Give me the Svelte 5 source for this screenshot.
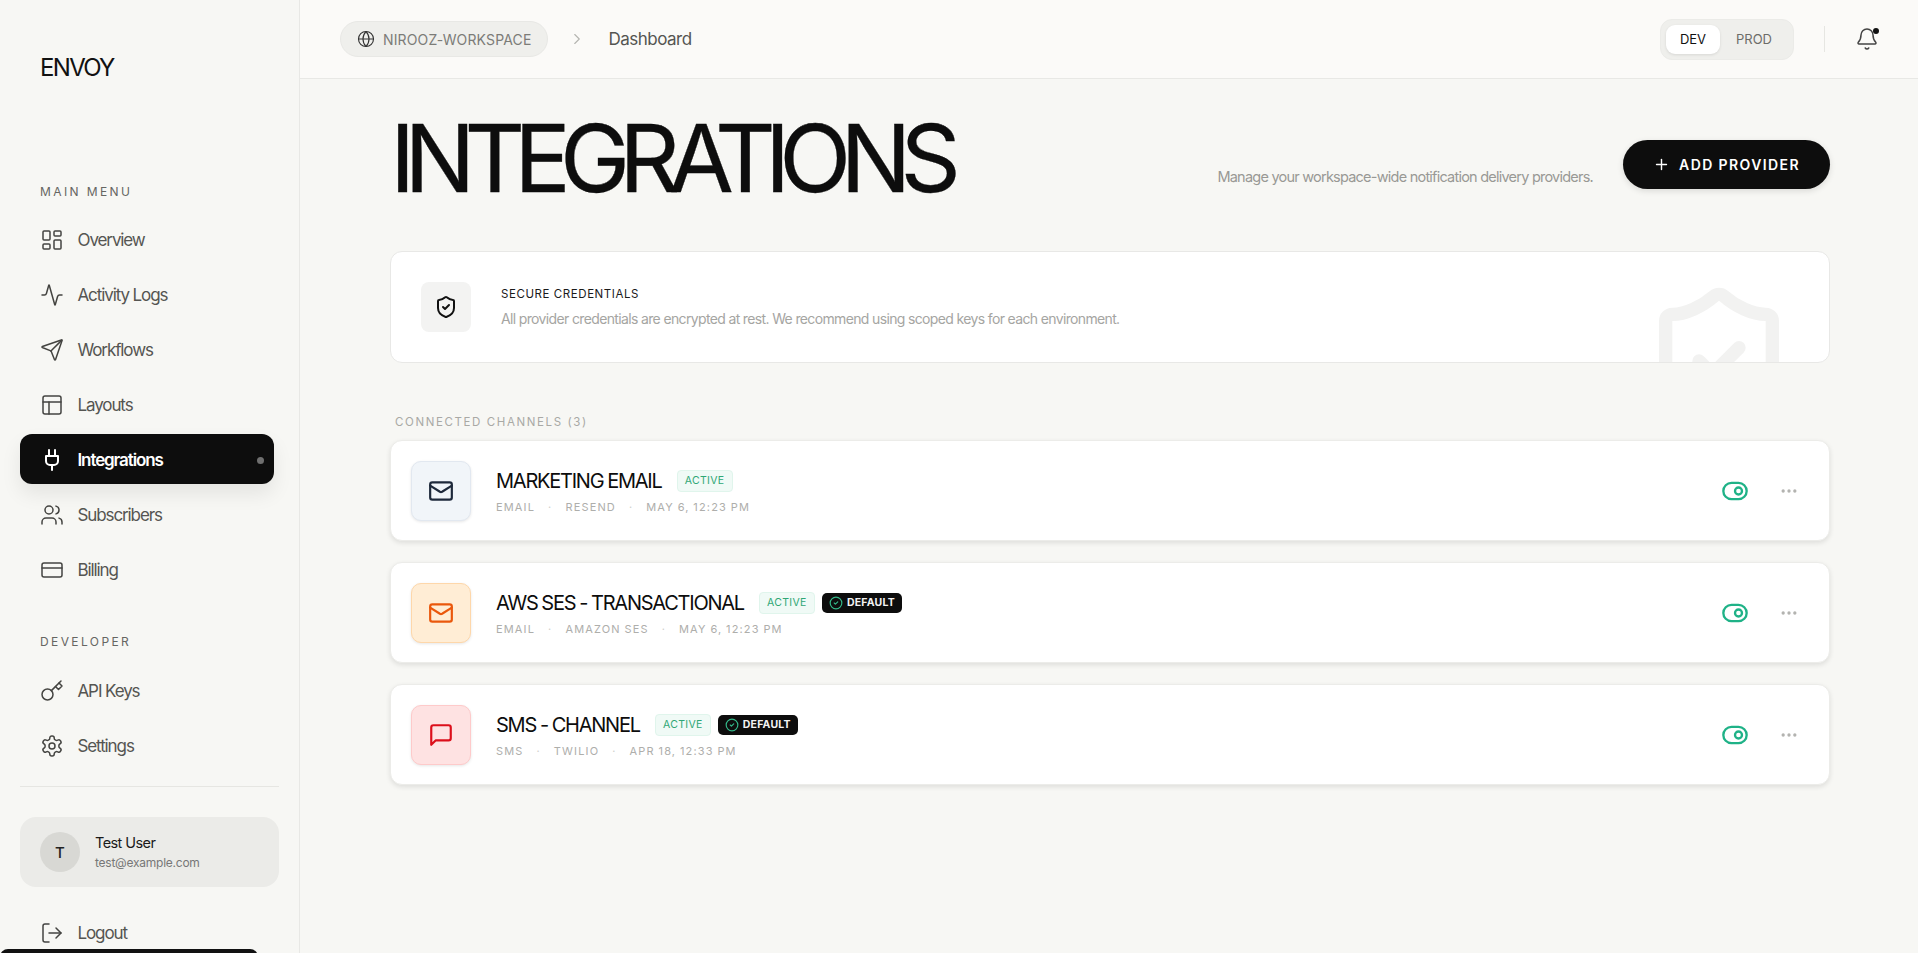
<script>
  const mainNav = [
    { label: 'Overview', icon: 'dashboard' },
    { label: 'Activity Logs', icon: 'activity' },
    { label: 'Workflows', icon: 'send' },
    { label: 'Layouts', icon: 'layout' },
    { label: 'Integrations', icon: 'plug', active: true },
    { label: 'Subscribers', icon: 'users' },
    { label: 'Billing', icon: 'card' }
  ];
  const devNav = [
    { label: 'API Keys', icon: 'key' },
    { label: 'Settings', icon: 'settings' }
  ];
  const channels = [
    { name: 'MARKETING EMAIL', kind: 'EMAIL', provider: 'RESEND', date: 'MAY 6, 12:23 PM', icon: 'mail', tone: 'slate' },
    { name: 'AWS SES - TRANSACTIONAL', kind: 'EMAIL', provider: 'AMAZON SES', date: 'MAY 6, 12:23 PM', icon: 'mail', tone: 'orange', isDefault: true },
    { name: 'SMS - CHANNEL', kind: 'SMS', provider: 'TWILIO', date: 'APR 18, 12:33 PM', icon: 'message', tone: 'red', isDefault: true }
  ];
</script>

{#snippet icon(name, size = 24, stroke = 2)}
  <svg width={size} height={size} viewBox="0 0 24 24" fill="none" stroke="currentColor" stroke-width={stroke} stroke-linecap="round" stroke-linejoin="round">
    {#if name === 'dashboard'}
      <rect x="3" y="3" width="7" height="9" rx="1" /><rect x="14" y="3" width="7" height="5" rx="1" /><rect x="14" y="12" width="7" height="9" rx="1" /><rect x="3" y="16" width="7" height="5" rx="1" />
    {:else if name === 'activity'}
      <path d="M22 12h-2.48a2 2 0 0 0-1.93 1.46l-2.35 8.36a.25.25 0 0 1-.48 0L9.24 2.18a.25.25 0 0 0-.48 0l-2.35 8.36A2 2 0 0 1 4.49 12H2" />
    {:else if name === 'send'}
      <path d="M14.536 21.686a.5.5 0 0 0 .937-.024l6.5-19a.496.496 0 0 0-.635-.635l-19 6.5a.5.5 0 0 0-.024.937l7.93 3.18a2 2 0 0 1 1.112 1.11z" /><path d="m21.854 2.147-10.94 10.939" />
    {:else if name === 'layout'}
      <rect x="3" y="3" width="18" height="18" rx="2" /><path d="M3 9h18" /><path d="M9 21V9" />
    {:else if name === 'plug'}
      <path d="M12 22v-5" /><path d="M9 8V2" /><path d="M15 8V2" /><path d="M18 8v5a4 4 0 0 1-4 4h-4a4 4 0 0 1-4-4V8Z" />
    {:else if name === 'users'}
      <path d="M16 21v-2a4 4 0 0 0-4-4H6a4 4 0 0 0-4 4v2" /><circle cx="9" cy="7" r="4" /><path d="M22 21v-2a4 4 0 0 0-3-3.87" /><path d="M16 3.13a4 4 0 0 1 0 7.75" />
    {:else if name === 'card'}
      <rect x="2" y="5" width="20" height="14" rx="2" /><path d="M2 10h20" />
    {:else if name === 'key'}
      <circle cx="7.5" cy="15.5" r="5.5" /><path d="m21 2-9.6 9.6" /><path d="m15.5 7.5 3 3L22 7l-3-3" />
    {:else if name === 'settings'}
      <path d="M12.22 2h-.44a2 2 0 0 0-2 2v.18a2 2 0 0 1-1 1.73l-.43.25a2 2 0 0 1-2 0l-.15-.08a2 2 0 0 0-2.73.73l-.22.38a2 2 0 0 0 .73 2.73l.15.1a2 2 0 0 1 1 1.72v.51a2 2 0 0 1-1 1.74l-.15.09a2 2 0 0 0-.73 2.73l.22.38a2 2 0 0 0 2.73.73l.15-.08a2 2 0 0 1 2 0l.43.25a2 2 0 0 1 1 1.73V20a2 2 0 0 0 2 2h.44a2 2 0 0 0 2-2v-.18a2 2 0 0 1 1-1.73l.43-.25a2 2 0 0 1 2 0l.15.08a2 2 0 0 0 2.73-.73l.22-.39a2 2 0 0 0-.73-2.73l-.15-.08a2 2 0 0 1-1-1.74v-.5a2 2 0 0 1 1-1.74l.15-.09a2 2 0 0 0 .73-2.73l-.22-.38a2 2 0 0 0-2.73-.73l-.15.08a2 2 0 0 1-2 0l-.43-.25a2 2 0 0 1-1-1.73V4a2 2 0 0 0-2-2z" /><circle cx="12" cy="12" r="3" />
    {:else if name === 'logout'}
      <path d="M9 21H5a2 2 0 0 1-2-2V5a2 2 0 0 1 2-2h4" /><path d="m16 17 5-5-5-5" /><path d="M21 12H9" />
    {:else if name === 'globe'}
      <circle cx="12" cy="12" r="10" /><path d="M12 2a14.5 14.5 0 0 0 0 20 14.5 14.5 0 0 0 0-20" /><path d="M2 12h20" />
    {:else if name === 'chevron'}
      <path d="m9 18 6-6-6-6" />
    {:else if name === 'bell'}
      <path d="M10.268 21a2 2 0 0 0 3.464 0" /><path d="M3.262 15.326A1 1 0 0 0 4 17h16a1 1 0 0 0 .74-1.673C19.41 13.956 18 12.499 18 8A6 6 0 0 0 6 8c0 4.499-1.411 5.956-2.738 7.326" />
    {:else if name === 'plus'}
      <path d="M5 12h14" /><path d="M12 5v14" />
    {:else if name === 'shield'}
      <path d="M20 13c0 5-3.5 7.5-7.66 8.95a1 1 0 0 1-.67-.01C7.5 20.5 4 18 4 13V6a1 1 0 0 1 1-1c2 0 4.5-1.2 6.24-2.72a1.17 1.17 0 0 1 1.52 0C14.51 3.81 17 5 19 5a1 1 0 0 1 1 1z" /><path d="m9 12 2 2 4-4" />
    {:else if name === 'mail'}
      <path d="m22 7-8.991 5.727a2 2 0 0 1-2.009 0L2 7" /><rect x="2" y="4" width="20" height="16" rx="2" />
    {:else if name === 'message'}
      <path d="M21 15a2 2 0 0 1-2 2H7l-4 4V5a2 2 0 0 1 2-2h14a2 2 0 0 1 2 2z" />
    {:else if name === 'toggle'}
      <circle cx="15" cy="12" r="3" /><rect x="2" y="5" width="20" height="14" rx="7" />
    {:else if name === 'more'}
      <circle cx="12" cy="12" r="1" /><circle cx="19" cy="12" r="1" /><circle cx="5" cy="12" r="1" />
    {:else if name === 'check'}
      <circle cx="12" cy="12" r="10" /><path d="m9 12 2 2 4-4" />
    {/if}
  </svg>
{/snippet}

{#snippet navItem(item)}
  <a class="nav-item" class:active={item.active} href="#top">
    <span class="nav-icon">{@render icon(item.icon, 24, item.active ? 2 : 1.5)}</span>
    <span>{item.label}</span>
    {#if item.active}<span class="nav-dot"></span>{/if}
  </a>
{/snippet}

<div class="shell">
  <aside class="sidebar">
    <div class="logo">ENVOY</div>

    <div class="section-label">MAIN MENU</div>
    <nav class="nav">
      {#each mainNav as item}
        {@render navItem(item)}
      {/each}
    </nav>

    <div class="section-label developer">DEVELOPER</div>
    <nav class="nav">
      {#each devNav as item}
        {@render navItem(item)}
      {/each}
    </nav>

    <div class="side-divider"></div>

    <div class="user-card">
      <div class="avatar">T</div>
      <div class="user-text">
        <div class="user-name">Test User</div>
        <div class="user-mail">test@example.com</div>
      </div>
    </div>

    <a class="nav-item logout" href="#top">
      <span class="nav-icon">{@render icon('logout', 24, 1.5)}</span>
      <span>Logout</span>
    </a>
  </aside>

  <div class="bottom-bar"></div>

  <div class="main">
    <header class="topbar">
      <div class="crumbs">
        <div class="workspace">
          {@render icon('globe', 18, 1.5)}
          <span>NIROOZ-WORKSPACE</span>
        </div>
        <span class="crumb-sep">{@render icon('chevron', 18, 1.5)}</span>
        <span class="crumb-page">Dashboard</span>
      </div>
      <div class="top-right">
        <div class="env">
          <span class="env-btn on">DEV</span>
          <span class="env-btn prod">PROD</span>
        </div>
        <div class="top-divider"></div>
        <div class="bell">
          {@render icon('bell', 24, 1.5)}
          <span class="bell-dot"></span>
        </div>
      </div>
    </header>

    <main class="content">
      <div class="page-head">
        <h1>INTEGRATIONS</h1>
        <div class="head-right">
          <p>Manage your workspace-wide notification delivery providers.</p>
          <button class="add-btn">
            {@render icon('plus', 17, 2)}
            <span>ADD PROVIDER</span>
          </button>
        </div>
      </div>

      <section class="secure">
        <div class="secure-icon">{@render icon('shield', 24, 2)}</div>
        <div class="secure-text">
          <div class="secure-title">SECURE CREDENTIALS</div>
          <div class="secure-desc">All provider credentials are encrypted at rest. We recommend using scoped keys for each environment.</div>
        </div>
        <div class="watermark">{@render icon('shield', 160, 2)}</div>
      </section>

      <div class="list-label">CONNECTED CHANNELS (3)</div>

      <div class="channels">
        {#each channels as c}
          <div class="channel">
            <div class="channel-icon {c.tone}">{@render icon(c.icon, 26, 2)}</div>
            <div class="channel-body">
              <div class="channel-top">
                <span class="channel-name">{c.name}</span>
                <span class="badge-active">ACTIVE</span>
                {#if c.isDefault}
                  <span class="badge-default">
                    {@render icon('check', 14, 2)}
                    DEFAULT
                  </span>
                {/if}
              </div>
              <div class="channel-meta">
                <span>{c.kind}</span><i>·</i><span>{c.provider}</span><i>·</i><span>{c.date}</span>
              </div>
            </div>
            <div class="channel-actions">
              <span class="toggle">{@render icon('toggle', 28, 2)}</span>
              <span class="more">{@render icon('more', 20, 2)}</span>
            </div>
          </div>
        {/each}
      </div>
    </main>
  </div>
</div>

<style>
  :global(body) {
    margin: 0;
    background: #f7f7f4;
  }

  .shell {
    display: flex;
    position: relative;
    height: 100vh;
    overflow: hidden;
    background: #f7f7f4;
    color: #0d0d0d;
    font-family: Inter, "Noto Sans", sans-serif;
  }

  svg {
    display: block;
  }

  /* sidebar */
  .sidebar {
    flex: 0 0 259px;
    box-sizing: content-box;
    border-right: 1px solid #e8e8e5;
    padding: 0 20px;
    overflow: hidden;
  }

  .logo {
    padding: 53px 0 0 20px;
    height: 30px;
    line-height: 30px;
    font-size: 24px;
    font-weight: 400;
    letter-spacing: -0.07em;
    color: #111;
    margin-bottom: 100px;
  }

  .section-label {
    padding-left: 20px;
    height: 18px;
    line-height: 18px;
    font-size: 12px;
    letter-spacing: 0.2em;
    color: #666662;
    margin-bottom: 13px;
  }

  .section-label.developer {
    margin-top: 39px;
    margin-bottom: 14px;
  }

  .nav {
    display: flex;
    flex-direction: column;
    gap: 5px;
  }

  .nav-item {
    display: flex;
    align-items: center;
    gap: 13.5px;
    height: 50px;
    padding: 2px 10px 0 20px;
    border-radius: 12px;
    font-size: 17px;
    letter-spacing: -0.065em;
    color: #555552;
    text-decoration: none;
    width: 254px;
    box-sizing: border-box;
  }

  .nav-item.active {
    background: #0d0d0d;
    color: #fff;
    font-weight: 600;
    box-shadow: 0 10px 20px rgba(0, 0, 0, 0.08);
  }

  .nav-icon {
    display: block;
    width: 24px;
    height: 24px;
    color: #444441;
  }

  .active .nav-icon {
    color: #fff;
  }

  .nav-dot {
    width: 7px;
    height: 7px;
    border-radius: 50%;
    background: #6f6f6f;
    margin-left: auto;
  }

  .side-divider {
    height: 1px;
    background: #e6e6e2;
    margin-top: 16px;
  }

  .user-card {
    display: flex;
    align-items: center;
    gap: 15px;
    height: 70px;
    margin-top: 30px;
    padding: 0 20px;
    border-radius: 16px;
    background: #ebebe8;
  }

  .avatar {
    display: flex;
    align-items: center;
    justify-content: center;
    width: 40px;
    height: 40px;
    border-radius: 50%;
    background: #d8d8d4;
    font-size: 15px;
    font-weight: 500;
    color: #222;
  }

  .user-text {
    padding-top: 2px;
  }

  .user-name {
    font-size: 14.5px;
    letter-spacing: -0.04em;
    font-weight: 400;
    color: #1a1a1a;
    line-height: 20px;
  }

  .user-mail {
    font-size: 12px;
    letter-spacing: -0.02em;
    color: #777;
    line-height: 20px;
  }

  .logout {
    margin-top: 20px;
  }

  .bottom-bar {
    position: absolute;
    left: 0;
    bottom: -20px;
    width: 258px;
    height: 24px;
    border-radius: 8px;
    background: #111;
  }

  /* top bar */
  .main {
    flex: 1;
    min-width: 0;
  }

  .topbar {
    display: flex;
    align-items: center;
    justify-content: space-between;
    height: 78px;
    padding: 0 39px 0 40px;
    background: #fbfaf8;
    border-bottom: 1px solid #e8e8e5;
  }

  .crumbs {
    display: flex;
    align-items: center;
  }

  .workspace {
    display: flex;
    align-items: center;
    gap: 8px;
    height: 36px;
    padding: 0 16px;
    border: 1px solid #e8e8e5;
    border-radius: 18px;
    background: #efefec;
    color: #333;
    box-sizing: border-box;
  }

  .workspace span {
    font-size: 14px;
    letter-spacing: 0.01em;
    color: #7c7c78;
  }

  .crumb-sep {
    margin: 0 22px 0 20px;
    color: #b4b4b0;
  }

  .crumb-page {
    font-size: 17px;
    letter-spacing: -0.03em;
    color: #555552;
  }

  .top-right {
    display: flex;
    align-items: center;
  }

  .env {
    display: flex;
    padding: 5px;
    height: 41px;
    box-sizing: border-box;
    border: 1px solid #ebebe8;
    border-radius: 12px;
    background: #efefec;
  }

  .env-btn {
    display: flex;
    align-items: center;
    justify-content: center;
    width: 54px;
    height: 29px;
    border-radius: 9px;
    font-size: 13px;
    font-weight: 400;
    color: #6c6c69;
  }

  .env-btn.prod {
    width: 68px;
  }

  .env-btn.on {
    background: #fff;
    color: #111;
    box-shadow: 0 1px 3px rgba(0, 0, 0, 0.1);
  }

  .top-divider {
    width: 1px;
    height: 26px;
    background: #e6e6e2;
    margin: 0 30px;
  }

  .bell {
    position: relative;
    color: #444;
  }

  .bell-dot {
    position: absolute;
    top: 1px;
    right: 0;
    width: 6px;
    height: 6px;
    border-radius: 50%;
    background: #111;
  }

  /* content */
  .content {
    width: 1440px;
    margin-left: 90px;
  }

  .page-head {
    display: flex;
    align-items: flex-end;
    justify-content: space-between;
    height: 172px;
  }

  h1 {
    margin: 0;
    font-size: 94px;
    font-weight: 400;
    line-height: 1;
    letter-spacing: -0.115em;
    color: #0d0d0d;
    padding-bottom: 46px;
    -webkit-text-stroke: 0.3px #0d0d0d;
  }

  .head-right {
    display: flex;
    align-items: flex-end;
    gap: 30px;
    padding-bottom: 62px;
  }

  .head-right p {
    margin: 0 0 4px;
    font-size: 14.5px;
    letter-spacing: -0.053em;
    color: #999995;
  }

  .add-btn {
    display: flex;
    align-items: center;
    justify-content: center;
    gap: 9px;
    width: 207px;
    height: 49px;
    border: 0;
    border-radius: 25px;
    background: #0d0d0d;
    color: #fff;
    font-family: inherit;
    font-size: 14px;
    font-weight: 600;
    letter-spacing: 0.1em;
    box-shadow: 0 2px 6px rgba(0, 0, 0, 0.12);
  }

  .secure {
    position: relative;
    display: flex;
    align-items: center;
    gap: 30px;
    height: 112px;
    box-sizing: border-box;
    padding: 0 30px;
    border: 1px solid #e8e8e6;
    border-radius: 12px;
    background: #fff;
    overflow: hidden;
  }

  .secure-icon {
    display: flex;
    align-items: center;
    justify-content: center;
    width: 50px;
    height: 50px;
    border-radius: 8px;
    background: #f3f3f2;
    color: #111;
  }

  .secure-text {
    padding-bottom: 2px;
  }

  .secure-title {
    font-size: 11.5px;
    font-weight: 400;
    letter-spacing: 0.05em;
    color: #1a1a1a;
    line-height: 16px;
    margin-bottom: 9px;
  }

  .secure-desc {
    font-size: 14px;
    letter-spacing: -0.046em;
    color: #a5a5a2;
    line-height: 16px;
  }

  .watermark {
    position: absolute;
    top: 29px;
    right: 30px;
    color: #f2f2f1;
  }

  .list-label {
    padding-left: 5px;
    margin-top: 50px;
    height: 18px;
    line-height: 18px;
    font-size: 11.5px;
    letter-spacing: 0.14em;
    color: #a9a9a5;
  }

  .channels {
    display: flex;
    flex-direction: column;
    gap: 21px;
    margin-top: 9px;
  }

  .channel {
    display: flex;
    align-items: center;
    height: 101px;
    box-sizing: border-box;
    padding: 0 20px;
    border: 1px solid #ecece9;
    border-radius: 12px;
    background: #fff;
    box-shadow: 0 2px 5px rgba(0, 0, 0, 0.1);
  }

  .channel-icon {
    display: flex;
    align-items: center;
    justify-content: center;
    width: 60px;
    height: 60px;
    border-radius: 10px;
    box-sizing: border-box;
    box-shadow: 0 1px 3px rgba(0, 0, 0, 0.1);
  }

  .slate {
    background: #f1f5f9;
    border: 1px solid #e2e8f0;
    color: #1e293b;
  }

  .orange {
    background: #ffedd5;
    border: 1px solid #fed7aa;
    color: #ea580c;
  }

  .red {
    background: #fee2e2;
    border: 1px solid #fecaca;
    color: #dc0f1b;
  }

  .channel-body {
    margin-left: 25px;
  }

  .channel-top {
    display: flex;
    align-items: center;
    gap: 15px;
    height: 28px;
    padding-top: 1px;
  }

  .channel-name {
    font-size: 20px;
    letter-spacing: -0.062em;
    word-spacing: -0.5px;
    color: #0d0d0d;
  }

  .badge-active {
    display: flex;
    align-items: center;
    justify-content: center;
    width: 56px;
    height: 22px;
    box-sizing: border-box;
    border: 1px solid #e0f5ec;
    border-radius: 4px;
    background: #f0faf6;
    font-size: 10.5px;
    letter-spacing: 0.03em;
    color: #2fa775;
  }

  .badge-default {
    display: flex;
    align-items: center;
    gap: 4px;
    height: 20px;
    margin-left: -8px;
    padding: 0 7px;
    border-radius: 5px;
    background: #0d0d0d;
    font-size: 10.5px;
    font-weight: 700;
    letter-spacing: 0.02em;
    color: #f2f2f2;
  }

  .badge-default :global(svg) {
    color: #34b98a;
  }

  .channel-meta {
    display: flex;
    gap: 13px;
    margin-top: 3px;
    font-size: 11px;
    letter-spacing: 0.105em;
    word-spacing: -0.5px;
    color: #aeaeab;
    line-height: 18px;
  }

  .channel-meta i {
    font-style: normal;
    color: #cfcfcc;
  }

  .channel-actions {
    display: flex;
    align-items: center;
    gap: 30px;
    margin-left: auto;
    padding-right: 10px;
  }

  .toggle {
    color: #1fb287;
  }

  .more {
    color: #b3b3b0;
  }
</style>
